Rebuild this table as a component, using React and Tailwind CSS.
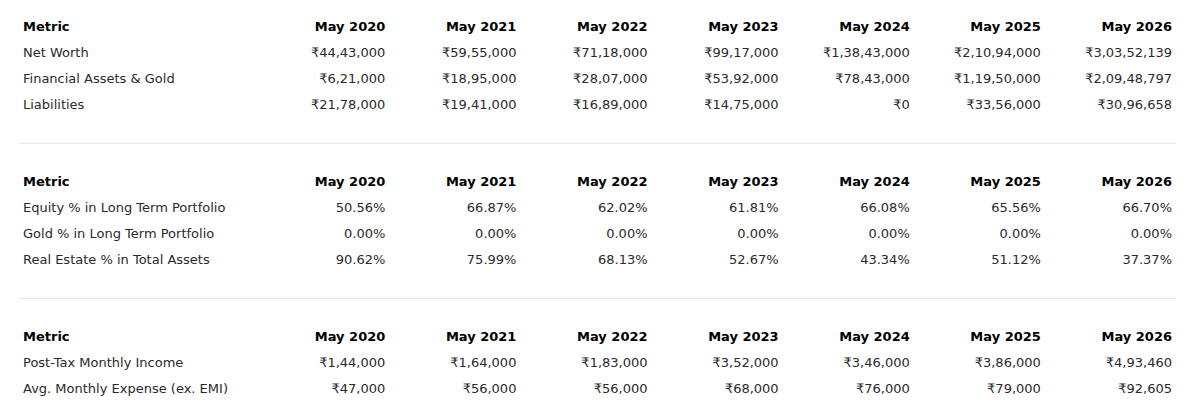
const years = ['May 2020', 'May 2021', 'May 2022', 'May 2023', 'May 2024', 'May 2025', 'May 2026'];

const tables = [
    [
        ['Net Worth', '₹44,43,000', '₹59,55,000', '₹71,18,000', '₹99,17,000', '₹1,38,43,000', '₹2,10,94,000', '₹3,03,52,139'],
        ['Financial Assets & Gold', '₹6,21,000', '₹18,95,000', '₹28,07,000', '₹53,92,000', '₹78,43,000', '₹1,19,50,000', '₹2,09,48,797'],
        ['Liabilities', '₹21,78,000', '₹19,41,000', '₹16,89,000', '₹14,75,000', '₹0', '₹33,56,000', '₹30,96,658'],
    ],
    [
        ['Equity % in Long Term Portfolio', '50.56%', '66.87%', '62.02%', '61.81%', '66.08%', '65.56%', '66.70%'],
        ['Gold % in Long Term Portfolio', '0.00%', '0.00%', '0.00%', '0.00%', '0.00%', '0.00%', '0.00%'],
        ['Real Estate % in Total Assets', '90.62%', '75.99%', '68.13%', '52.67%', '43.34%', '51.12%', '37.37%'],
    ],
    [
        ['Post-Tax Monthly Income', '₹1,44,000', '₹1,64,000', '₹1,83,000', '₹3,52,000', '₹3,46,000', '₹3,86,000', '₹4,93,460'],
        ['Avg. Monthly Expense (ex. EMI)', '₹47,000', '₹56,000', '₹56,000', '₹68,000', '₹76,000', '₹79,000', '₹92,605'],
    ],
];

function MetricTable({ rows }) {
    return (
        <table className="w-full table-fixed border-collapse">
            <colgroup>
                <col className="w-[239px]" />
                {years.map((y) => (
                    <col key={y} className="w-[131px]" />
                ))}
            </colgroup>
            <thead>
                <tr className="h-[25.75px]">
                    <th className="px-1 py-0 text-left font-bold text-black">Metric</th>
                    {years.map((y) => (
                        <th key={y} className="px-1 py-0 text-right font-bold text-black">{y}</th>
                    ))}
                </tr>
            </thead>
            <tbody>
                {rows.map((row) => (
                    <tr key={row[0]} className="h-[25.75px]">
                        {row.map((cell, i) => (
                            <td key={i} className={`px-1 py-0 text-[#2a2a2a] ${i === 0 ? 'text-left' : 'text-right'}`}>
                                {cell}
                            </td>
                        ))}
                    </tr>
                ))}
            </tbody>
        </table>
    );
}

export default function App() {
    return (
        <div className="min-h-screen bg-white font-['DejaVu_Sans',sans-serif] text-[13px] leading-none">
            <div className="ml-[19px] w-[1157px] pt-[14px]">
                {tables.map((rows, idx) => (
                    <div
                        key={idx}
                        className={idx < tables.length - 1 ? 'pb-[26px] mb-[25px] border-b border-[#e5e7eb]' : ''}
                    >
                        <MetricTable rows={rows} />
                    </div>
                ))}
            </div>
        </div>
    );
}
